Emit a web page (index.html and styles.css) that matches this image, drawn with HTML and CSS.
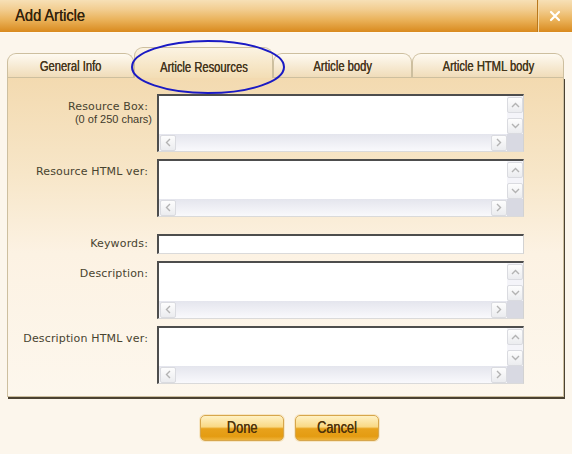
FILE: index.html
```html
<!DOCTYPE html>
<html>
<head>
<meta charset="utf-8">
<link rel="stylesheet" href="styles.css">
</head>
<body>
<div class="titlebar">
  <div class="title"><span class="narrow">Add Article</span></div>
  <div class="close"><svg width="12" height="12" viewBox="0 0 12 12"><path d="M2 2L10 10M10 2L2 10" stroke="#fff" stroke-width="2.2" stroke-linecap="round"/></svg></div>
</div>
<div class="content">
  <div class="tabs">
    <div class="tab t1"><span class="narrow">General Info</span></div>
    <div class="tab t2 active"><span class="narrow">Article Resources</span></div>
    <div class="tab t3"><span class="narrow">Article body</span></div>
    <div class="tab t4"><span class="narrow">Article HTML body</span></div>
    <svg class="highlight" width="156" height="60" viewBox="0 0 156 60"><ellipse cx="77" cy="30" rx="76" ry="26" fill="none" stroke="#1a1ac4" stroke-width="2"/></svg>
  </div>
  <div class="panel">
    <div class="form">
      <div class="label">Resource Box:<span class="sub">(0 of 250 chars)</span></div>
      <div class="ta">
        <div class="area"></div>
        <div class="vs">
          <div class="sbtn"><svg width="9" height="6" viewBox="0 0 9 6"><polyline points="1,5 4.5,1.5 8,5" fill="none" stroke="#b3b3b3" stroke-width="1.4"/></svg></div>
          <div class="sbtn"><svg width="9" height="6" viewBox="0 0 9 6"><polyline points="1,1 4.5,4.5 8,1" fill="none" stroke="#b3b3b3" stroke-width="1.4"/></svg></div>
        </div>
        <div class="hs">
          <div class="sbtn"><svg width="6" height="9" viewBox="0 0 6 9"><polyline points="5,1 1.5,4.5 5,8" fill="none" stroke="#b3b3b3" stroke-width="1.4"/></svg></div>
          <div class="sbtn"><svg width="6" height="9" viewBox="0 0 6 9"><polyline points="1,1 4.5,4.5 1,8" fill="none" stroke="#b3b3b3" stroke-width="1.4"/></svg></div>
        </div>
        <div class="corner"></div>
      </div>

      <div class="label">Resource HTML ver:</div>
      <div class="ta">
        <div class="area"></div>
        <div class="vs">
          <div class="sbtn"><svg width="9" height="6" viewBox="0 0 9 6"><polyline points="1,5 4.5,1.5 8,5" fill="none" stroke="#b3b3b3" stroke-width="1.4"/></svg></div>
          <div class="sbtn"><svg width="9" height="6" viewBox="0 0 9 6"><polyline points="1,1 4.5,4.5 8,1" fill="none" stroke="#b3b3b3" stroke-width="1.4"/></svg></div>
        </div>
        <div class="hs">
          <div class="sbtn"><svg width="6" height="9" viewBox="0 0 6 9"><polyline points="5,1 1.5,4.5 5,8" fill="none" stroke="#b3b3b3" stroke-width="1.4"/></svg></div>
          <div class="sbtn"><svg width="6" height="9" viewBox="0 0 6 9"><polyline points="1,1 4.5,4.5 1,8" fill="none" stroke="#b3b3b3" stroke-width="1.4"/></svg></div>
        </div>
        <div class="corner"></div>
      </div>

      <div class="label mid gap">Keywords:</div>
      <div class="input gap"></div>

      <div class="label">Description:</div>
      <div class="ta">
        <div class="area"></div>
        <div class="vs">
          <div class="sbtn"><svg width="9" height="6" viewBox="0 0 9 6"><polyline points="1,5 4.5,1.5 8,5" fill="none" stroke="#b3b3b3" stroke-width="1.4"/></svg></div>
          <div class="sbtn"><svg width="9" height="6" viewBox="0 0 9 6"><polyline points="1,1 4.5,4.5 8,1" fill="none" stroke="#b3b3b3" stroke-width="1.4"/></svg></div>
        </div>
        <div class="hs">
          <div class="sbtn"><svg width="6" height="9" viewBox="0 0 6 9"><polyline points="5,1 1.5,4.5 5,8" fill="none" stroke="#b3b3b3" stroke-width="1.4"/></svg></div>
          <div class="sbtn"><svg width="6" height="9" viewBox="0 0 6 9"><polyline points="1,1 4.5,4.5 1,8" fill="none" stroke="#b3b3b3" stroke-width="1.4"/></svg></div>
        </div>
        <div class="corner"></div>
      </div>

      <div class="label">Description HTML ver:</div>
      <div class="ta">
        <div class="area"></div>
        <div class="vs">
          <div class="sbtn"><svg width="9" height="6" viewBox="0 0 9 6"><polyline points="1,5 4.5,1.5 8,5" fill="none" stroke="#b3b3b3" stroke-width="1.4"/></svg></div>
          <div class="sbtn"><svg width="9" height="6" viewBox="0 0 9 6"><polyline points="1,1 4.5,4.5 8,1" fill="none" stroke="#b3b3b3" stroke-width="1.4"/></svg></div>
        </div>
        <div class="hs">
          <div class="sbtn"><svg width="6" height="9" viewBox="0 0 6 9"><polyline points="5,1 1.5,4.5 5,8" fill="none" stroke="#b3b3b3" stroke-width="1.4"/></svg></div>
          <div class="sbtn"><svg width="6" height="9" viewBox="0 0 6 9"><polyline points="1,1 4.5,4.5 1,8" fill="none" stroke="#b3b3b3" stroke-width="1.4"/></svg></div>
        </div>
        <div class="corner"></div>
      </div>
    </div>
  </div>
  <div class="actions">
    <button class="btn"><span class="narrow">Done</span></button>
    <button class="btn"><span class="narrow">Cancel</span></button>
  </div>
</div>
</body>
</html>
```
FILE: styles.css
```css
* { box-sizing: border-box; }
html, body { margin: 0; padding: 0; }
body {
  width: 572px;
  height: 454px;
  overflow: hidden;
  background: #fcf6ec;
  font-family: "DejaVu Sans", sans-serif;
}
.narrow {
  display: inline-block;
  white-space: nowrap;
  transform: scaleX(0.8);
}
.titlebar {
  height: 32px;
  display: flex;
  background: linear-gradient(#f7e0b6 0%, #f2cd90 30%, #eab25a 62%, #d98a1e 100%);
  box-shadow: 0 1px 0 #fffaf0;
}
.title {
  flex: 1;
  padding-left: 15px;
  font-family: "Liberation Sans", sans-serif;
  font-size: 17px;
  line-height: 31px;
  color: #33230c;
  text-shadow: 0.3px 0 0 #33230c;
}
.title .narrow {
  transform: scaleX(0.86);
  transform-origin: left center;
}
.close {
  width: 35px;
  border-left: 1px solid #b9781d;
  box-shadow: inset 1px 0 0 #f6d9a2;
  display: flex;
  align-items: center;
  justify-content: center;
}
.content {
  padding: 15px 0 0 7px;
}
.tabs {
  position: relative;
  display: flex;
  align-items: flex-end;
  height: 30px;
  width: 557px;
}
.tab {
  height: 24px;
  border: 1px solid #cdbf9f;
  border-bottom: none;
  border-radius: 9px 9px 0 0;
  background: linear-gradient(#fefaf1, #f0dcb9);
  font-family: "Liberation Sans", sans-serif;
  font-size: 14px;
  color: #45361c;
  text-shadow: 0.25px 0 0 #45361c;
  display: flex;
  align-items: center;
  justify-content: center;
}
.t1 { width: 127px; }
.t2 { width: 139px; }
.t3 { width: 139px; }
.t4 { width: 152px; }
.tab.active {
  position: relative;
  z-index: 1;
  height: 31px;
  margin-bottom: -1px;
  padding-top: 7px;
  background: linear-gradient(#fbf3e2, #f3ddb4);
}
.highlight {
  position: absolute;
  left: 124px;
  top: -10px;
  z-index: 2;
}
.panel {
  width: 557px;
  border: 1px solid #cdbf9f;
  box-shadow: 1px 2px 0 #4b4232;
  background: linear-gradient(#f3dab0 0%, #f7e6c8 30%, #fcf2e3 55%, #fdf7ed 100%);
  padding: 16px 0 12px;
}
.form {
  display: grid;
  grid-template-columns: 140px 367px;
  column-gap: 9px;
  row-gap: 7px;
}
.label {
  text-align: right;
  padding-top: 7px;
  font-size: 11px;
  letter-spacing: 0.15px;
  line-height: 12px;
  color: #48432f;
}
.label.mid {
  align-self: center;
  padding-top: 0;
}
.gap { margin-top: 10px; }
.sub {
  display: block;
  margin-right: -4px;
  font-family: "Liberation Sans", sans-serif;
  font-size: 11px;
  letter-spacing: 0;
  color: #3f3a2c;
}
.ta {
  height: 58px;
  background: #fff;
  border-style: solid;
  border-width: 2px 1px 1px 2px;
  border-color: #4d4d4d #d2d2d2 #dadada #4d4d4d;
  display: grid;
  grid-template-columns: 1fr 16px;
  grid-template-rows: 1fr 17px;
}
.input {
  height: 20px;
  background: #fff;
  border-style: solid;
  border-width: 2px 1px 1px 2px;
  border-color: #4d4d4d #d2d2d2 #dadada #4d4d4d;
}
.vs {
  display: flex;
  flex-direction: column;
  justify-content: space-between;
  background: #f4f4f9;
  padding-top: 1px;
}
.hs {
  display: flex;
  align-items: center;
  justify-content: space-between;
  padding-left: 1px;
  background: linear-gradient(#e4e5ed, #f9f9fc);
}
.sbtn {
  width: 16px;
  height: 16px;
  border: 1px solid #dadbe0;
  border-radius: 2px;
  background: linear-gradient(#fdfdfd, #ebecef);
  display: flex;
  align-items: center;
  justify-content: center;
}
.corner { background: #d8d9e2; }
.actions {
  display: flex;
  justify-content: center;
  gap: 11px;
  margin-top: 18px;
}
.btn {
  width: 84px;
  height: 26px;
  padding: 0;
  border: 1px solid #d7a64c;
  border-radius: 5px;
  background: linear-gradient(#fff1c4 0%, #f9d985 45%, #e8a21c 53%, #e49c12 85%, #efb43c 100%);
  box-shadow: 0 0 0 1px #f7e6c4;
  font-family: "Liberation Sans", sans-serif;
  font-size: 16px;
  color: #4f330a;
  text-shadow: 0.3px 0 0 #4f330a;
}
```
